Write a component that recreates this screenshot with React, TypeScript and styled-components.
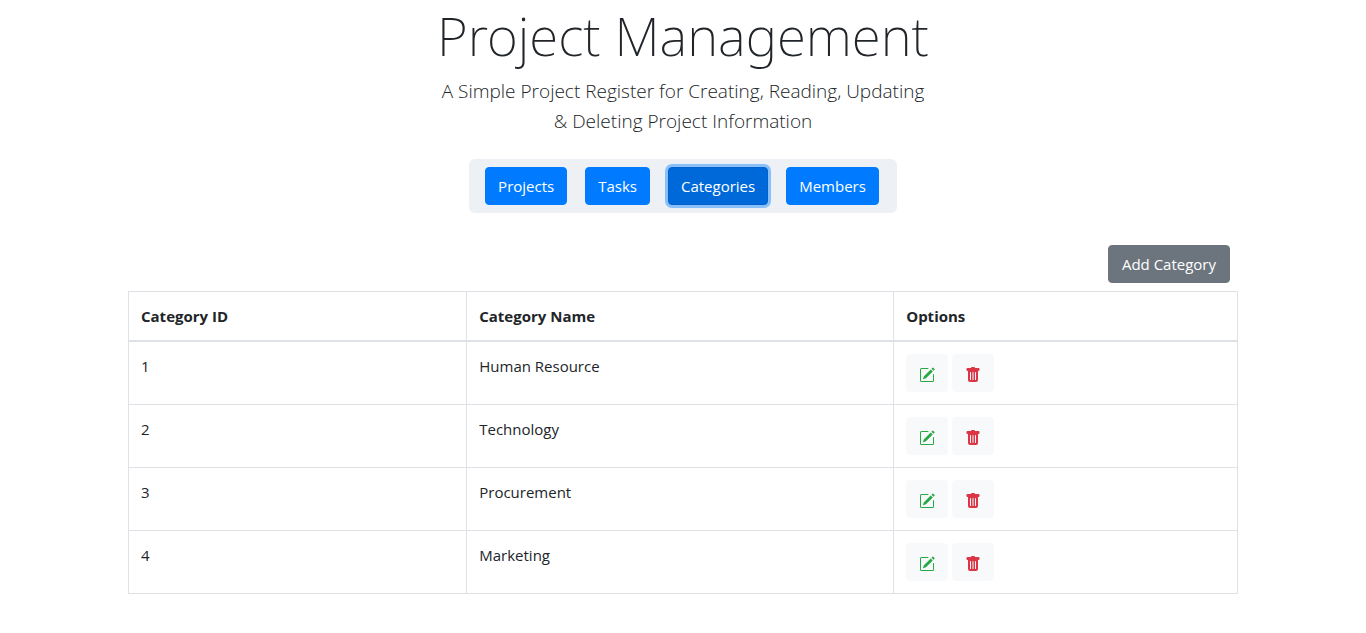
import React, { useState } from "react";
import styled, { createGlobalStyle } from "styled-components";
import { BsPencilSquare, BsTrashFill } from "react-icons/bs";

const GlobalStyle = createGlobalStyle`
  *, *::before, *::after { box-sizing: border-box; }
  body {
    margin: 0;
    background: #fff;
    color: #212529;
    font-family: "Segoe UI", "Open Sans", "Noto Sans", sans-serif;
    font-size: 15px;
    line-height: 24px;
  }
`;

const Page = styled.main`
  width: 100%;
  max-width: 1140px;
  margin: 0 auto;
  padding: 0 15px 24px;
`;

const Header = styled.header`
  text-align: center;
`;

const Title = styled.h1`
  margin: 0 0 4px;
  font-family: "Segoe UI", "Noto Sans", sans-serif;
  font-size: 53px;
  font-weight: 200;
  line-height: 72px;
`;

const Lead = styled.p`
  margin: 0 0 23px;
  font-size: 19px;
  font-weight: 300;
  line-height: 30px;
`;

const Nav = styled.nav`
  display: flex;
  gap: 18px;
  width: fit-content;
  margin: 0 auto 32px;
  padding: 8px 18px 8px 16px;
  background: #edf0f5;
  border-radius: 6px;
`;

const Button = styled.button`
  height: 38px;
  padding: 6px 12px;
  border: 1px solid transparent;
  border-radius: 4px;
  color: #fff;
  font: inherit;
  cursor: pointer;
`;

const NavButton = styled(Button)<{ $active: boolean }>`
  background: ${(p) => (p.$active ? "#0069d9" : "#007bff")};
  border-color: ${(p) => (p.$active ? "#0062cc" : "#007bff")};
  box-shadow: ${(p) => (p.$active ? "0 0 0 3px rgba(38, 143, 255, 0.5)" : "none")};
`;

const Toolbar = styled.div`
  display: flex;
  justify-content: flex-end;
  padding: 0 8px 8px;
`;

const AddButton = styled(Button)`
  padding: 6px 13px;
  background: #6c757d;
  border-color: #6c757d;
`;

const Table = styled.table`
  width: 100%;
  table-layout: fixed;
  border-collapse: collapse;
  border: 1px solid #dee2e6;
`;

const HeadCell = styled.th<{ $width: string }>`
  width: ${(p) => p.$width};
  padding: 12px;
  border: 1px solid #dee2e6;
  border-bottom-width: 2px;
  text-align: left;
  font-weight: 700;
`;

const Cell = styled.td`
  padding: 12px;
  border: 1px solid #dee2e6;
  vertical-align: top;
`;

const Options = styled.div`
  display: flex;
  gap: 4px;
`;

const IconButton = styled(Button)<{ $tone: string }>`
  background: #f8f9fa;
  border-color: #f8f9fa;
  color: ${(p) => p.$tone};

  svg {
    width: 16px;
    height: 16px;
    vertical-align: middle;
  }
`;

const sections = ["Projects", "Tasks", "Categories", "Members"];

const categories = [
  { id: 1, name: "Human Resource" },
  { id: 2, name: "Technology" },
  { id: 3, name: "Procurement" },
  { id: 4, name: "Marketing" },
];

export default function App() {
  const [active, setActive] = useState("Categories");

  return (
    <>
      <GlobalStyle />
      <Page>
        <Header>
          <Title>Project Management</Title>
          <Lead>
            A Simple Project Register for Creating, Reading, Updating
            <br />
            &amp; Deleting Project Information
          </Lead>
        </Header>
        <Nav>
          {sections.map((name) => (
            <NavButton
              key={name}
              type="button"
              $active={name === active}
              onClick={() => setActive(name)}
            >
              {name}
            </NavButton>
          ))}
        </Nav>
        <Toolbar>
          <AddButton type="button">Add Category</AddButton>
        </Toolbar>
        <Table>
          <thead>
            <tr>
              <HeadCell scope="col" $width="30.5%">Category ID</HeadCell>
              <HeadCell scope="col" $width="38.5%">Category Name</HeadCell>
              <HeadCell scope="col" $width="31%">Options</HeadCell>
            </tr>
          </thead>
          <tbody>
            {categories.map(({ id, name }) => (
              <tr key={id}>
                <Cell>{id}</Cell>
                <Cell>{name}</Cell>
                <Cell>
                  <Options>
                    <IconButton type="button" $tone="#28a745" aria-label={`Edit ${name}`}>
                      <BsPencilSquare />
                    </IconButton>
                    <IconButton type="button" $tone="#dc3545" aria-label={`Delete ${name}`}>
                      <BsTrashFill />
                    </IconButton>
                  </Options>
                </Cell>
              </tr>
            ))}
          </tbody>
        </Table>
      </Page>
    </>
  );
}
